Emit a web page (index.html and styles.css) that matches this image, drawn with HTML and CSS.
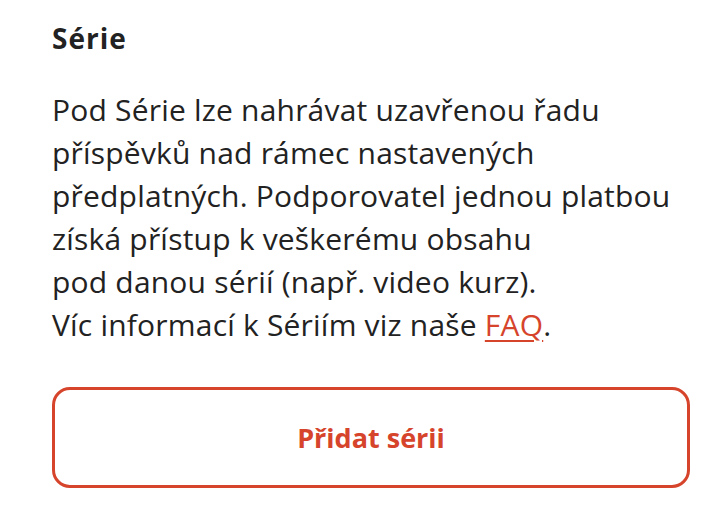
FILE: index.html
```html
<!DOCTYPE html>
<html lang="cs">
<head>
  <meta charset="UTF-8">
  <title>Série</title>
  <link rel="stylesheet" href="styles.css">
</head>
<body>
  <section class="series">
    <h2 class="series-title">Série</h2>
    <p class="series-text">
      Pod Série lze nahrávat uzavřenou řadu<br>
      příspěvků nad rámec nastavených<br>
      předplatných. Podporovatel jednou platbou<br>
      získá přístup k veškerému obsahu<br>
      pod danou sérií (např. video kurz).<br>
      Víc informací k Sériím viz naše <a href="#" class="link">FAQ</a>.
    </p>
    <button class="add-button">Přidat sérii</button>
  </section>
</body>
</html>
```

FILE: styles.css
```css
body {
  margin: 0;
  background-color: #fff;
  font-family: 'Open Sans', 'Noto Sans', sans-serif;
  color: #222;
}

.series {
  width: 638px;
  padding: 20px 0 0 52px;
}

.series-title {
  font-size: 28px;
  font-weight: 700;
  line-height: 36px;
  letter-spacing: 1px;
  margin: 0 0 32px;
}

.series-text {
  font-size: 30px;
  line-height: 43px;
  letter-spacing: 0.2px;
  margin: 0 0 41px;
}

.link {
  color: #d6442c;
  text-decoration: underline;
  text-decoration-thickness: 2px;
  text-underline-offset: 4px;
}

.add-button {
  display: block;
  width: 638px;
  height: 101px;
  border: 3px solid #d6442c;
  border-radius: 18px;
  background-color: #fff;
  color: #d6442c;
  font-family: 'Open Sans', 'Noto Sans', sans-serif;
  font-size: 27px;
  font-weight: 700;
  cursor: pointer;
}
```
